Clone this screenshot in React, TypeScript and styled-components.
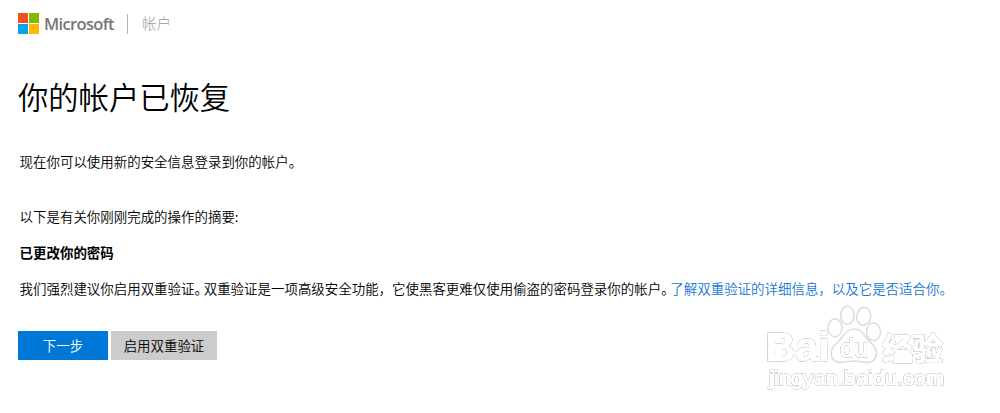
import { ReactNode } from "react"
import styled, { createGlobalStyle } from "styled-components"

const GlobalStyle = createGlobalStyle`
  body {
    margin: 0;
    background: #FFFFFF;
    font-family: "Noto Sans CJK SC", sans-serif;
    color: #000000;
  }
`

const Page = styled.div`
  position: relative;
  box-sizing: border-box;
  height: 413px;
  padding: 13px 18px 0;
  overflow: hidden;
`

const Header = styled.header`
  display: flex;
  align-items: center;
  height: 21px;
`

const Logo = styled.div`
  display: grid;
  grid-template-columns: 10px 10px;
  grid-template-rows: 10px 10px;
  gap: 1px;
`

const Tile = styled.div<{ $color: string }>`
  background: ${(props) => props.$color};
`

const Brand = styled.div`
  width: 70px;
  margin-left: 5px;
  font-family: "Open Sans", sans-serif;
  font-weight: 600;
  font-size: 16.5px;
  line-height: 21px;
  letter-spacing: -0.65px;
  color: #777777;
`

const Divider = styled.div`
  width: 1px;
  height: 20px;
  margin: 0 14px 0 13px;
  background: #B4B4B4;
`

const Section = styled.div`
  padding-bottom: 2px;
  font-weight: 300;
  font-size: 14.5px;
  line-height: 21px;
  color: #999999;
`

const Title = styled.h1`
  margin: 40px 0 0;
  font-weight: 350;
  font-size: 30.3px;
  line-height: 44px;
`

const Text = styled.p<{ $top: number; $bold?: boolean }>`
  margin: ${(props) => props.$top}px 0 0 1.6px;
  font-weight: ${(props) => (props.$bold ? 700 : 350)};
  font-size: 13.46px;
  line-height: 20px;
  white-space: nowrap;
`

const Stop = styled.span`
  margin-right: 2.5px;
  font-feature-settings: "halt";
`

const Link = styled.a`
  color: #1877D2;
  text-decoration: none;
`

const Actions = styled.div`
  display: flex;
  gap: 3px;
  margin-top: 33px;
`

const Button = styled.button<{ $primary?: boolean }>`
  width: ${(props) => (props.$primary ? 90 : 106)}px;
  height: 29px;
  padding: 0;
  border: 0;
  background: ${(props) => (props.$primary ? "#0078D7" : "#CCCCCC")};
  color: ${(props) => (props.$primary ? "#FFFFFF" : "#000000")};
  font-family: inherit;
  font-weight: 350;
  font-size: 13.45px;
  line-height: 29px;
`

const WatermarkSvg = styled.svg`
  position: absolute;
  left: 760px;
  top: 300px;
  pointer-events: none;
`

const Outlined = styled.text<{ $weight?: number }>`
  fill: #FFFFFF;
  stroke: #FFFFFF;
  stroke-width: 1.2px;
  stroke-linejoin: round;
  font-family: "Liberation Sans", "Noto Sans CJK SC", sans-serif;
  font-weight: ${(props) => props.$weight ?? 400};
  filter: drop-shadow(0 0 0.6px #8C8C8C) drop-shadow(0 0 0.4px #C8C8C8);
`

interface ParagraphProps {
  top: number
  bold?: boolean
  children: ReactNode
}

const Paragraph: React.FC<ParagraphProps> = (props) => {
  const { top, bold, children } = props
  return (
    <Text $top={top} $bold={bold}>
      {children}
    </Text>
  )
}

const Watermark: React.FC = () => (
  <WatermarkSvg width="200" height="100" viewBox="0 0 200 100">
    <g fill="#FFFFFF" stroke="#DCDCDC" strokeWidth="1.5">
      <ellipse cx="75" cy="27.8" rx="7" ry="9" />
      <ellipse cx="87.4" cy="15.3" rx="6.8" ry="9" />
      <ellipse cx="103.7" cy="16.3" rx="7" ry="9" transform="rotate(10 103.7 16.3)" />
      <ellipse cx="113.5" cy="31.8" rx="7" ry="8.7" />
      <path d="M94 29C85 29 83 38 77 43C70 48 70 56 74 60C79 65 86 61 94 61C102 61 109 65 114 60C119 54 116 47 110 42C104 37 103 29 94 29Z" />
    </g>
    <Outlined x="5.5" y="61" fontSize="41" $weight={700} textLength="64" lengthAdjust="spacingAndGlyphs">Bai</Outlined>
    <Outlined x="80" y="57" fontSize="25" $weight={400} textLength="28" lengthAdjust="spacingAndGlyphs">du</Outlined>
    <Outlined x="122" y="60" fontSize="31" $weight={700} textLength="61" lengthAdjust="spacingAndGlyphs">经验</Outlined>
    <Outlined x="9" y="85" fontSize="21" textLength="175" lengthAdjust="spacingAndGlyphs">jingyan.baidu.com</Outlined>
  </WatermarkSvg>
)

const App: React.FC = () => (
  <>
    <GlobalStyle />
    <Page>
      <Header>
        <Logo>
          <Tile $color="#F25022" />
          <Tile $color="#7FBA00" />
          <Tile $color="#00A4EF" />
          <Tile $color="#FFB900" />
        </Logo>
        <Brand>Microsoft</Brand>
        <Divider />
        <Section>帐户</Section>
      </Header>
      <Title>你的帐户已恢复</Title>
      <Paragraph top={33}>现在你可以使用新的安全信息登录到你的帐户。</Paragraph>
      <Paragraph top={35}>以下是有关你刚刚完成的操作的摘要:</Paragraph>
      <Paragraph top={16} bold>已更改你的密码</Paragraph>
      <Paragraph top={16}>
        我们强烈建议你启用双重验证<Stop>。</Stop>双重验证是一项高级安全功能，它使黑客更难仅使用偷盗的密码登录你的帐户<Stop>。</Stop>
        <Link href="#">了解双重验证的详细信息，以及它是否适合你。</Link>
      </Paragraph>
      <Actions>
        <Button $primary>下一步</Button>
        <Button>启用双重验证</Button>
      </Actions>
      <Watermark />
    </Page>
  </>
)

export default App
